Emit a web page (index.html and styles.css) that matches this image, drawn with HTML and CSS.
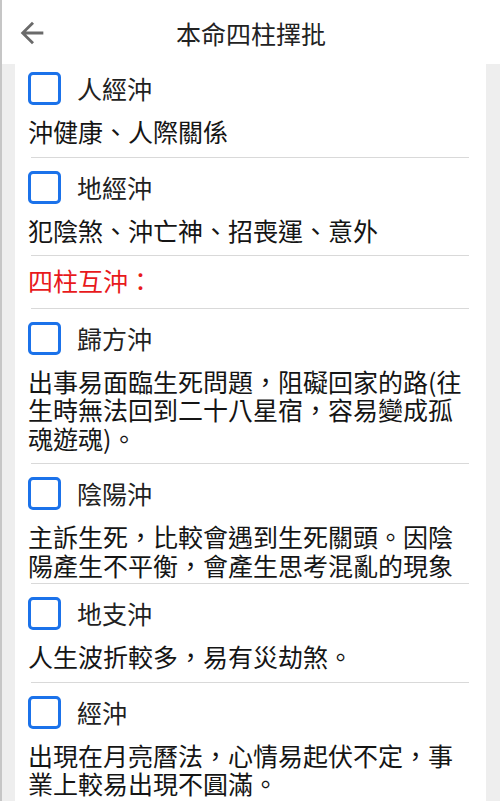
FILE: index.html
```html
<!DOCTYPE html>
<html lang="zh-Hant">
<head>
<meta charset="utf-8">
<title>本命四柱擇批</title>
<link rel="stylesheet" href="styles.css">
</head>
<body>
<div class="app">
  <header class="topbar">
    <button class="back" aria-label="返回">
      <svg viewBox="0 0 24 24" width="34" height="34"><path d="M20 11H7.83l5.59-5.59L12 4l-8 8 8 8 1.41-1.41L7.83 13H20v-2z" fill="currentColor"/></svg>
    </button>
    <h1 class="title">本命四柱擇批</h1>
    <span></span>
  </header>
  <main class="card">
    <section class="item first">
      <div class="check-row"><span class="box"></span><span class="label">人經沖</span></div>
      <p class="desc">沖健康、人際關係</p>
    </section>
    <div class="divider"></div>
    <section class="item">
      <div class="check-row"><span class="box"></span><span class="label">地經沖</span></div>
      <p class="desc">犯陰煞、沖亡神、招喪運、意外</p>
    </section>
    <div class="divider"></div>
    <section class="heading">四柱互沖：</section>
    <div class="divider"></div>
    <section class="item">
      <div class="check-row"><span class="box"></span><span class="label">歸方沖</span></div>
      <p class="desc">出事易面臨生死問題，阻礙回家的路(往生時無法回到二十八星宿，容易變成孤魂遊魂)。</p>
    </section>
    <div class="divider"></div>
    <section class="item clipped">
      <div class="check-row"><span class="box"></span><span class="label">陰陽沖</span></div>
      <p class="desc">主訴生死，比較會遇到生死關頭。因陰陽產生不平衡，會產生思考混亂的現象</p>
    </section>
    <div class="divider"></div>
    <section class="item">
      <div class="check-row"><span class="box"></span><span class="label">地支沖</span></div>
      <p class="desc">人生波折較多，易有災劫煞。</p>
    </section>
    <div class="divider"></div>
    <section class="item">
      <div class="check-row"><span class="box"></span><span class="label">經沖</span></div>
      <p class="desc">出現在月亮曆法，心情易起伏不定，事業上較易出現不圓滿。</p>
    </section>
  </main>
</div>
</body>
</html>
```

FILE: styles.css
```css
* { box-sizing: border-box; }

html, body {
  margin: 0;
  padding: 0;
}

body {
  font-family: "Noto Sans CJK TC", "Noto Sans", sans-serif;
  color: #1a1a1a;
  background: #eeeeee;
}

.app {
  height: 801px;
  overflow: hidden;
  border-left: 2px solid #c6c6c6;
  background: #eeeeee;
  display: flex;
  flex-direction: column;
}

.topbar {
  height: 64px;
  flex: none;
  background: #ffffff;
  display: grid;
  grid-template-columns: 1fr auto 1fr;
  align-items: center;
}

.back {
  justify-self: start;
  margin: 2px 0 0 13px;
  padding: 0;
  border: 0;
  background: none;
  color: #6a6a6a;
  width: 34px;
  height: 34px;
  display: flex;
}

.title {
  margin: 2px 0 0 0;
  font-size: 25px;
  font-weight: 400;
  color: #222222;
  line-height: 34px;
}

.card {
  flex: 1;
  margin: 0 14px 0 13px;
  background: #ffffff;
  padding: 0 17px 0 13px;
}

.item {
  padding: 13px 0 11px;
}

.item.first {
  padding-top: 8px;
}

.item.clipped {
  padding-bottom: 4px;
}

.check-row {
  display: flex;
  align-items: center;
  gap: 16px;
  height: 33px;
}

.box {
  width: 33px;
  height: 33px;
  border: 3px solid #1b72ea;
  border-radius: 5px;
  flex: none;
}

.label {
  font-size: 25px;
  color: #222222;
  line-height: 33px;
}

.desc {
  margin: 12px 0 0;
  font-size: 25px;
  line-height: 28.5px;
  color: #151515;
}

.heading {
  padding: 10px 0 13px;
  font-size: 25px;
  line-height: 28.5px;
  color: #e8191c;
}

.divider {
  height: 1px;
  margin-left: 3px;
  background: #d9d9d9;
}
```
